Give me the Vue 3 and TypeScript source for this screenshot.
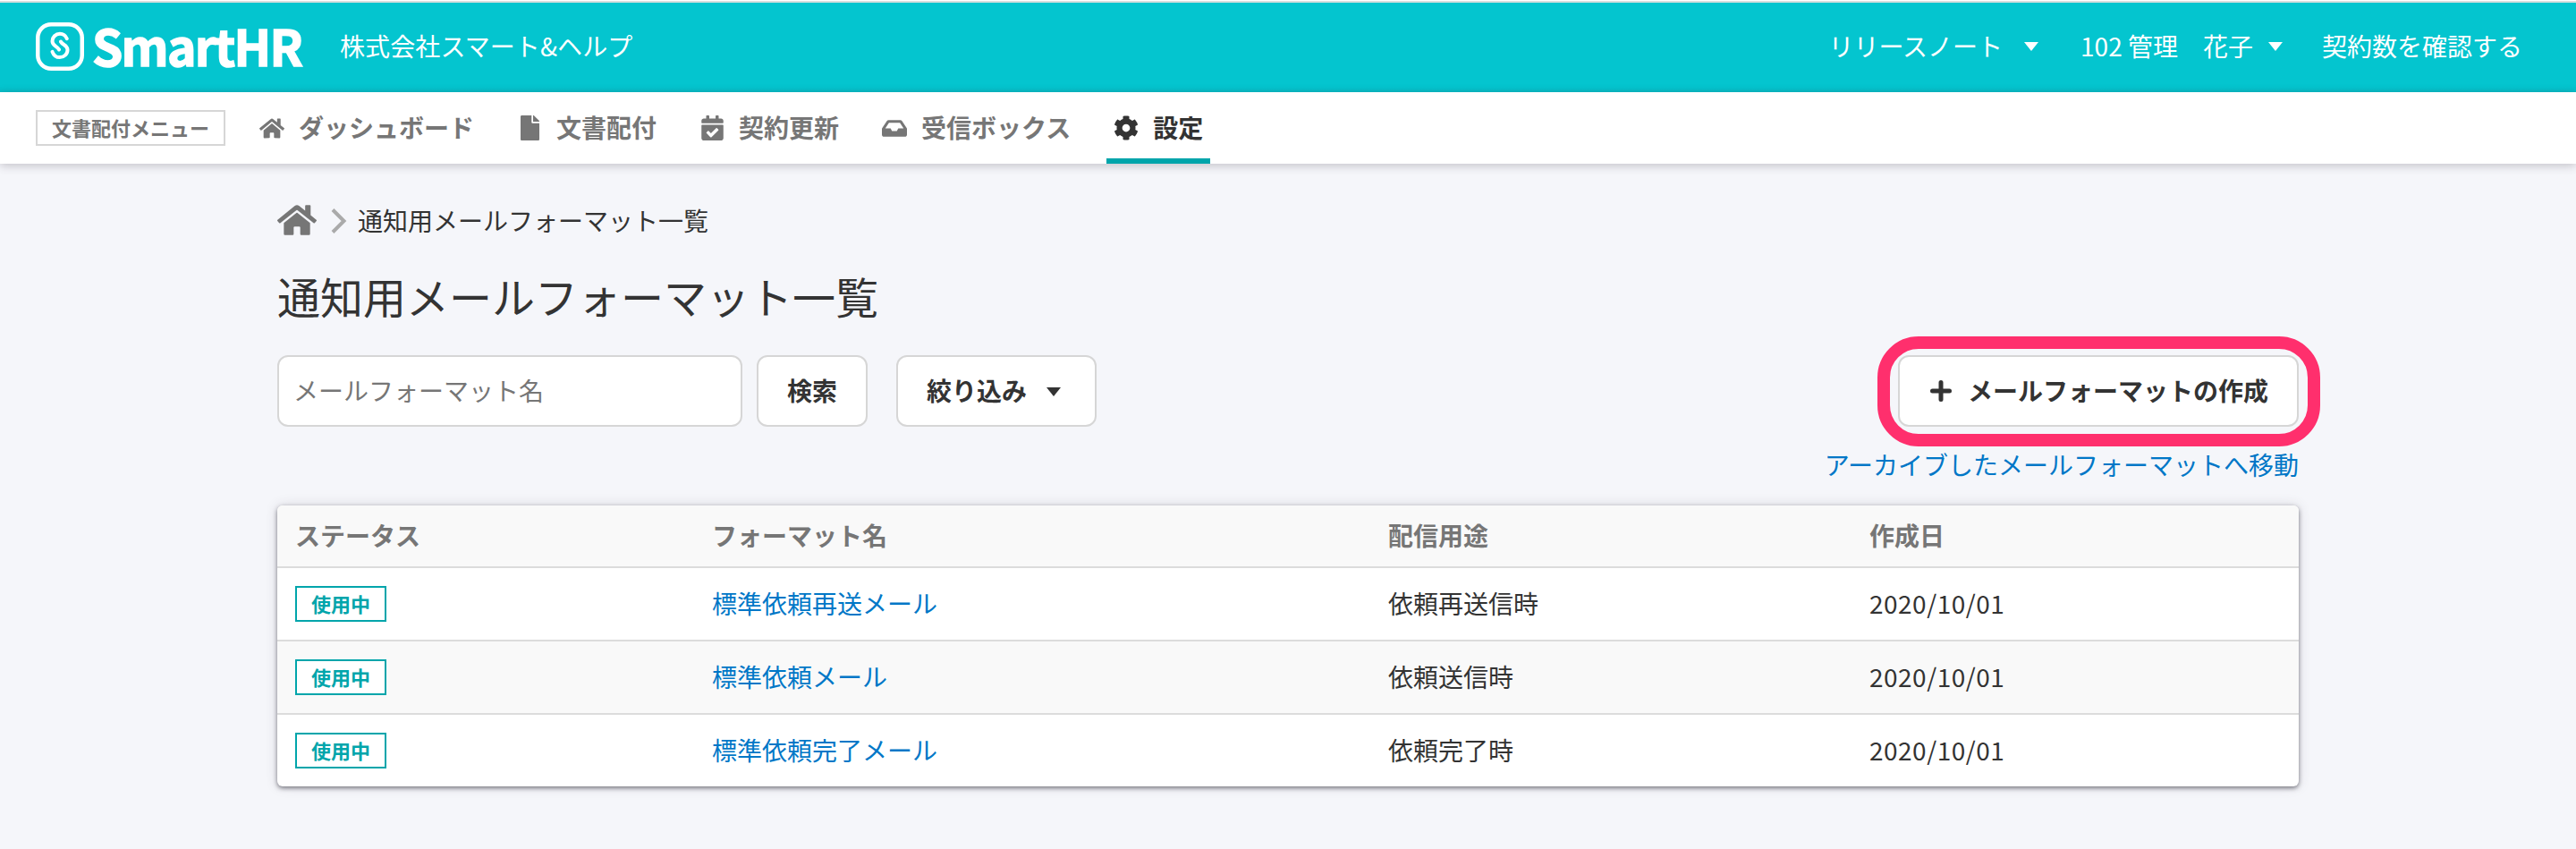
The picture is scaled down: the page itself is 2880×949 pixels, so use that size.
<script setup lang="ts">
interface NavItem { label: string; icon: string; viewBox: string; w: number; h: number; active?: boolean }
interface Row { name: string; usage: string; date: string }

const home = 'M280.4 148.3 96 300.1V464a16 16 0 0 0 16 16l112.1-.3a16 16 0 0 0 15.900-16V368a16 16 0 0 1 16-16h64a16 16 0 0 1 16 16v95.600a16 16 0 0 0 16 16.100L464 480a16 16 0 0 0 16-16V300L295.700 148.300a12.200 12.200 0 0 0-15.300 0zM571.600 251.500 488 182.600V44.100a12 12 0 0 0-12-12h-56a12 12 0 0 0-12 12v72.600L318.500 43a48 48 0 0 0-61 0L4.300 251.500a12 12 0 0 0-1.600 16.900l25.500 31A12 12 0 0 0 45.200 301l235.200-193.700a12.200 12.200 0 0 1 15.300 0L530.900 301a12 12 0 0 0 16.900-1.600l25.500-31a12 12 0 0 0-1.700-16.900z'
const navItems: NavItem[] = [
  { label: 'ダッシュボード', icon: home, viewBox: '0 0 576 512', w: 28, h: 25 },
  { label: '文書配付', icon: 'M224 136V0H24C10.700 0 0 10.700 0 24v464c0 13.300 10.700 24 24 24h336c13.300 0 24-10.700 24-24V160H248c-13.200 0-24-10.800-24-24zm160-14.100v6.100H256V0h6.100c6.400 0 12.500 2.500 17 7l97.900 98c4.500 4.500 7 10.600 7 16.900z', viewBox: '0 0 384 512', w: 21, h: 28 },
  { label: '契約更新', icon: 'M436 160H12c-6.600 0-12-5.400-12-12v-36c0-26.500 21.500-48 48-48h48V12c0-6.600 5.400-12 12-12h40c6.600 0 12 5.400 12 12v52h128V12c0-6.600 5.400-12 12-12h40c6.600 0 12 5.400 12 12v52h48c26.500 0 48 21.500 48 48v36c0 6.600-5.400 12-12 12zM12 192h424c6.600 0 12 5.400 12 12v260c0 26.500-21.500 48-48 48H48c-26.500 0-48-21.500-48-48V204c0-6.600 5.400-12 12-12zm333.300 95.900-28.200-28.400c-4.700-4.700-12.300-4.700-17-.1L194 364.800l-46.100-46.500c-4.700-4.700-12.300-4.700-17-.1l-28.400 28.200c-4.700 4.700-4.700 12.300-.1 17l82.600 83.300c4.700 4.700 12.300 4.700 17 .1l143.200-142c4.700-4.700 4.700-12.300.1-16.900z', viewBox: '0 0 448 512', w: 25, h: 28 },
  { label: '受信ボックス', icon: 'M567.900 243.900 462.300 85.400A48 48 0 0 0 422.300 64H153.700a48 48 0 0 0-40 21.400L8.100 243.900A48 48 0 0 0 0 270.500V400c0 26.500 21.500 48 48 48h480c26.500 0 48-21.500 48-48V270.500a48 48 0 0 0-8.100-26.600zM162.300 128h251.400l85.300 128H376l-32 64H232l-32-64H77z', viewBox: '0 0 576 512', w: 28, h: 25 },
  { label: '設定', icon: 'M487.400 315.700l-42.600-24.600c4.300-23.200 4.300-47 0-70.200l42.600-24.600c4.900-2.800 7.100-8.600 5.500-14-11.100-35.600-30-67.800-54.700-94.600-3.800-4.100-10-5.100-14.800-2.300L380.800 110c-17.900-15.400-38.500-27.300-60.800-35.100V25.800c0-5.600-3.900-10.500-9.400-11.700-36.700-8.200-74.300-7.800-109.200 0-5.500 1.200-9.400 6.100-9.400 11.700V75c-22.200 7.900-42.800 19.800-60.800 35.100L88.700 85.500c-4.900-2.800-11-1.900-14.800 2.300-24.700 26.700-43.600 58.900-54.700 94.600-1.700 5.400.6 11.200 5.500 14L67.300 221c-4.300 23.200-4.300 47 0 70.200l-42.600 24.600c-4.900 2.800-7.100 8.600-5.500 14 11.100 35.600 30 67.800 54.700 94.600 3.800 4.100 10 5.100 14.800 2.300l42.600-24.600c17.900 15.400 38.500 27.300 60.800 35.100v49.200c0 5.600 3.900 10.500 9.400 11.700 36.700 8.200 74.300 7.800 109.200 0 5.500-1.200 9.400-6.100 9.400-11.700v-49.200c22.200-7.900 42.800-19.800 60.800-35.100l42.600 24.600c4.900 2.800 11 1.900 14.800-2.300 24.700-26.700 43.600-58.900 54.700-94.600 1.500-5.500-.7-11.300-5.600-14.100zM256 336c-44.100 0-80-35.900-80-80s35.900-80 80-80 80 35.900 80 80-35.900 80-80 80z', viewBox: '0 0 512 512', w: 28, h: 28, active: true },
]
const columns = ['ステータス', 'フォーマット名', '配信用途', '作成日']
const rows: Row[] = [
  { name: '標準依頼再送メール', usage: '依頼再送信時', date: '2020/10/01' },
  { name: '標準依頼メール', usage: '依頼送信時', date: '2020/10/01' },
  { name: '標準依頼完了メール', usage: '依頼完了時', date: '2020/10/01' },
]
</script>

<template>
  <div class="page">
    <header class="header">
      <div class="logo">
        <svg class="mark" viewBox="0 0 54 54" fill="none" stroke="#fff">
          <rect x="2.250" y="2.250" width="49.500" height="49.500" rx="15" stroke-width="4.500" />
          <g stroke-width="4" stroke-linecap="round">
            <path d="M34.800 18.200C33.300 14.800 30.500 12.800 27 12.800c-4.900 0-8.500 3.700-8.500 8.200 0 5.500 5.500 5.300 7.600 9.500" />
            <path d="M18.500 32.800c1.500 4.200 4.800 6.300 8.300 6.300 5 0 8.700-3.700 8.700-8.300 0-5.600-5.600-5.200-7.600-9.300" />
          </g>
        </svg>
        <span class="wordmark">SmartHR</span>
      </div>
      <span class="company">株式会社スマート&amp;ヘルプ</span>
      <div class="header-links">
        <a class="release"><span>リリースノート</span><i class="caret" /></a>
        <a class="user"><span>102 管理　花子</span><i class="caret" /></a>
        <a><span>契約数を確認する</span></a>
      </div>
    </header>

    <nav class="nav">
      <span class="menu-tag">文書配付メニュー</span>
      <a v-for="item in navItems" :key="item.label" class="nav-item" :class="{ active: item.active }">
        <i class="nav-icon">
          <svg :viewBox="item.viewBox" :width="item.w" :height="item.h" fill="currentColor"><path fill-rule="evenodd" :d="item.icon" /></svg>
        </i>
        <span>{{ item.label }}</span>
      </a>
    </nav>

    <main class="content">
      <div class="breadcrumb">
        <svg class="crumb-home" viewBox="0 28 576 456" preserveAspectRatio="none"><path :d="home" /></svg>
        <svg class="crumb-arrow" viewBox="0 0 18 28"><path d="M2 1.500 14.500 14 2 26.500" /></svg>
        <span>通知用メールフォーマット一覧</span>
      </div>
      <h1>通知用メールフォーマット一覧</h1>

      <div class="toolbar">
        <input class="search" type="text" placeholder="メールフォーマット名" />
        <button class="btn search-btn">検索</button>
        <button class="btn filter-btn">絞り込み<i class="caret" /></button>
        <button class="btn create-btn">
          <svg viewBox="0 0 24 24"><path d="M12 2.500v19M2.500 12h19" /></svg>メールフォーマットの作成
          <span class="highlight" />
        </button>
      </div>
      <a class="archive">アーカイブしたメールフォーマットへ移動</a>

      <div class="table">
        <div class="row head">
          <div v-for="c in columns" :key="c">{{ c }}</div>
        </div>
        <div v-for="r in rows" :key="r.name" class="row">
          <div class="status"><span class="badge">使用中</span></div>
          <div class="link">{{ r.name }}</div>
          <div>{{ r.usage }}</div>
          <div class="date">{{ r.date }}</div>
        </div>
      </div>
    </main>
  </div>
</template>

<style>
body { margin: 0; background: #f5f6fa; }
</style>

<style scoped>
* { box-sizing: border-box; }
.page {
  height: 949px;
  overflow: hidden;
  background: #f5f6fa;
  color: #333;
  font: 28px/1 "Noto Sans CJK JP", sans-serif;
  white-space: nowrap;
}
.header {
  height: 103px;
  padding: 1px 60px 0 40px;
  display: flex;
  align-items: center;
  color: #fff;
  background: linear-gradient(#fff 0 1px, #d9dedd 1px 3px, #04c5cf 3px 97px, #04bdc7);
}
.logo { display: flex; align-items: center; }
.mark { width: 54px; height: 54px; }
.wordmark {
  margin-left: 9px;
  padding-bottom: 5px;
  width: 239px;
  font: 700 55px/54px "Noto Sans CJK JP", sans-serif;
  letter-spacing: -1.700px;
  -webkit-text-stroke: 1.500px #fff;
}
.company { margin-left: 38px; padding-bottom: 3px; letter-spacing: .1px; }
.header-links { margin-left: auto; display: flex; align-items: center; }
.header-links a { display: flex; align-items: center; }
.header-links span { padding-bottom: 3px; }
.release { margin-right: 47px; }
.user { margin-right: 44px; }
.caret { border: 8px solid transparent; border-top: 10px solid currentColor; border-bottom: 0; }
.release .caret { margin-left: 24px; }
.user .caret { margin-left: 17px; }
.nav {
  position: relative;
  height: 80px;
  padding-left: 40px;
  display: flex;
  background: #fff;
  box-shadow: 0 2px 10px rgba(60, 50, 70, .28);
  color: #767676;
  font-weight: 700;
}
.menu-tag {
  width: 212px;
  height: 40px;
  margin: 20px 30px 0 0;
  border: 2px solid #d6d6d6;
  font-size: 22px;
  line-height: 34px;
  text-align: center;
}
.nav-item { height: 80px; margin-right: 32px; padding: 0 8px; display: flex; align-items: center; }
.nav-icon { width: 28px; height: 28px; display: flex; align-items: center; justify-content: center; }
.nav-item span { margin-left: 16px; padding-bottom: 3px; }
.nav-item.active { color: #333; border-bottom: 6px solid #00a5ab; padding-top: 6px; }
.content { width: 2260px; margin: 0 auto; padding-top: 42px; }
.breadcrumb { height: 42px; display: flex; align-items: center; }
.breadcrumb span { padding-bottom: 1px; }
.crumb-home { width: 44px; height: 34px; fill: #767676; }
.crumb-arrow { width: 18px; height: 28px; margin: 2px 12px 0 16px; fill: none; stroke: #aaa; stroke-width: 4; }
h1 { margin: 38px 0 0; font-size: 48px; line-height: 50px; font-weight: 400; }
.toolbar { margin-top: 42px; height: 80px; display: flex; }
.search, .btn {
  height: 80px;
  border: 2px solid #d6d6d6;
  border-radius: 12px;
  background: #fff;
  font: 28px/1 "Noto Sans CJK JP", sans-serif;
  color: #333;
}
.search { width: 520px; padding: 0 16px 2px; }
.search::placeholder { color: #767676; }
.btn { padding: 0 0 2px; display: flex; align-items: center; justify-content: center; font-weight: 700; }
.search-btn { width: 124px; margin-left: 16px; }
.filter-btn { width: 224px; margin-left: 32px; padding-left: 32px; justify-content: flex-start; }
.filter-btn .caret { margin: 4px 0 0 22px; }
.create-btn { position: relative; width: 448px; margin-left: auto; }
.create-btn svg { width: 24px; height: 24px; margin: 2px 18px 0 2px; fill: none; stroke: currentColor; stroke-width: 5; stroke-linecap: round; }
.highlight {
  position: absolute;
  inset: -23px -26px -24px -25px;
  border: 14px solid #ff2f6d;
  border-radius: 46px;
}
.archive { display: block; margin-top: 28px; text-align: right; color: #0077c7; }
.table {
  margin-top: 32px;
  border-radius: 6px;
  overflow: hidden;
  background: #fff;
  box-shadow: 0 2px 5px rgba(30, 30, 40, .55), 0 0 14px rgba(60, 50, 70, .15);
}
.row { display: grid; grid-template-columns: 466px 756px 538px 1fr; height: 82px; border-top: 2px solid #dcdcdc; }
.row > div { padding: 0 0 2px 20px; display: flex; align-items: center; }
.row > .status { padding-bottom: 0; }
.row:nth-child(odd) { background: #f9f9f9; }
.head.row { height: 68px; border: 0; color: #767676; font-weight: 700; }
.link { color: #0077c7; }
.date { letter-spacing: .5px; }
.badge {
  width: 102px;
  height: 40px;
  border: 2px solid #00a5ab;
  background: #fff;
  color: #00a5ab;
  font-size: 22px;
  line-height: 34px;
  font-weight: 700;
  text-align: center;
}
</style>
